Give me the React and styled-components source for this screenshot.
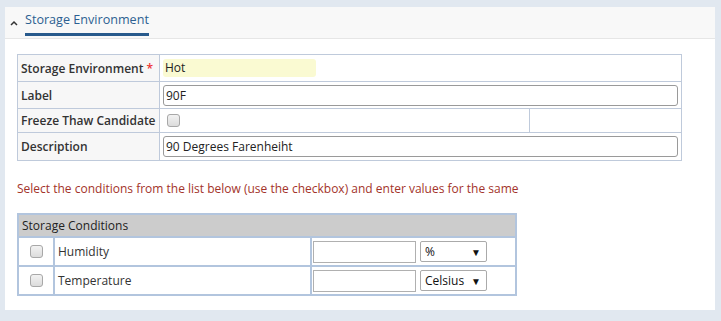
import styled, { createGlobalStyle } from "styled-components";

const GlobalStyle = createGlobalStyle`
  html, body {
    margin: 0;
    padding: 0;
    background: #e1e8f0;
    font-family: "Open Sans", "Liberation Sans", sans-serif;
    font-size: 12px;
    color: #333;
  }
`;

const Page = styled.div`
  padding: 7px 6px 11px 5px;
`;

const Panel = styled.div`
  background: #fff;
  padding-bottom: 14px;
`;

const Header = styled.div`
  display: flex;
  align-items: flex-end;
  height: 31px;
  background: #f8f8f8;
  border-bottom: 1px solid #e6e6e6;
  padding-left: 5px;
`;

const Chevron = styled.svg`
  width: 8px;
  height: 6px;
  margin: 0 7px 12px 0;
`;

const Tab = styled.div`
  font-size: 12.6px;
  color: #2c5f91;
  padding: 0 0 5px;
  border-bottom: 3px solid #285a8c;
  margin-bottom: 2px;
`;

const Body = styled.div`
  padding: 15px 33px 0 12px;
`;

const FormTable = styled.table`
  width: 665px;
  border-collapse: collapse;
  border: 1px solid #bfcadb;

  td {
    border: 1px solid #bfcadb;
    padding: 0 3px;
  }
`;

const Row = styled.tr`
  height: ${(p) => p.$h}px;
`;

const LabelCell = styled.td`
  width: 135px;
  background: #f7f7f7;
  font-weight: 600;
  color: #333;
  white-space: nowrap;
`;

const Req = styled.span`
  color: #e33;
  margin-left: 3px;
`;

const YellowInput = styled.div`
  width: 151px;
  height: 18px;
  line-height: 18px;
  background: #fafad2;
  border-radius: 3px;
  padding-left: 2px;
  color: #222;
`;

const TextInput = styled.input`
  box-sizing: border-box;
  width: ${(p) => p.$w || "100%"};
  height: ${(p) => p.$hh || 21}px;
  border: 1px solid ${(p) => (p.$flat ? "#b0b0b0" : "#9a9a9a")};
  border-radius: ${(p) => (p.$flat ? 0 : 3)}px;
  font: inherit;
  color: #222;
  padding: 0 2px;
  display: block;
`;

const Check = styled.input.attrs({ type: "checkbox" })`
  appearance: none;
  width: 13px;
  height: 13px;
  margin: 0 0 0 ${(p) => p.$indent || 0}px;
  border: 1px solid #a8a8a8;
  border-radius: 3px;
  background: linear-gradient(#f2f2f2, #dcdcdc);
  display: block;
`;

const Instruction = styled.p`
  margin: 19px 0 16px 0;
  color: #a3332a;
  font-size: 12px;
`;

const CondTable = styled.table`
  width: 500px;
  table-layout: fixed;
  border-collapse: collapse;
  border: 2px solid #b2c5de;

  td, th {
    border: 2px solid #b2c5de;
  }
`;

const CondHead = styled.th`
  background: #cccccc;
  font-weight: 400;
  text-align: left;
  height: 21px;
  padding: 0 3px;
  color: #222;
`;

const CondRow = styled.tr`
  height: 29px;
`;

const CheckCell = styled.td`
  padding: 0 0 0 11px;
`;

const NameCell = styled.td`
  padding: 0 3px;
  color: #333;
`;

const ValueCell = styled.td`
  padding: 0 1px;
`;

const ValueWrap = styled.div`
  display: flex;
  gap: 4px;
  align-items: center;
`;

const SelectBox = styled.div`
  position: relative;
  width: 67px;
  height: 21px;
`;

const Select = styled.select`
  appearance: none;
  box-sizing: border-box;
  width: 100%;
  height: 100%;
  border: 1px solid #aaa;
  border-radius: 2px;
  background: #fff;
  font: inherit;
  color: #111;
  padding: 0 4px;
`;

const Arrow = styled.span`
  position: absolute;
  right: 6px;
  top: 4px;
  font-size: 10px;
  color: #111;
  pointer-events: none;
`;

function Unit({ value }) {
  return (
    <SelectBox>
      <Select defaultValue={value}>
        <option>{value}</option>
      </Select>
      <Arrow>▼</Arrow>
    </SelectBox>
  );
}

function Condition({ name, unit }) {
  return (
    <CondRow>
      <CheckCell>
        <Check />
      </CheckCell>
      <NameCell>{name}</NameCell>
      <ValueCell>
        <ValueWrap>
          <TextInput $w="103px" $hh={22} $flat />
          <Unit value={unit} />
        </ValueWrap>
      </ValueCell>
    </CondRow>
  );
}

export default function App() {
  return (
    <>
      <GlobalStyle />
      <Page>
        <Panel>
          <Header>
            <Chevron viewBox="0 0 8 6">
              <path d="M1 5 L4 2 L7 5" fill="none" stroke="#333" strokeWidth="1.5" />
            </Chevron>
            <Tab>Storage Environment</Tab>
          </Header>
          <Body>
            <FormTable>
              <tbody>
                <Row $h={27}>
                  <LabelCell>
                    Storage Environment<Req>*</Req>
                  </LabelCell>
                  <td colSpan={2}>
                    <YellowInput>Hot</YellowInput>
                  </td>
                </Row>
                <Row $h={27}>
                  <LabelCell>Label</LabelCell>
                  <td colSpan={2}>
                    <TextInput defaultValue="90F" />
                  </td>
                </Row>
                <Row $h={24}>
                  <LabelCell>Freeze Thaw Candidate</LabelCell>
                  <td style={{ width: 363 }}>
                    <Check $indent={4} />
                  </td>
                  <td />
                </Row>
                <Row $h={28}>
                  <LabelCell>Description</LabelCell>
                  <td colSpan={2}>
                    <TextInput defaultValue="90 Degrees Farenheiht" />
                  </td>
                </Row>
              </tbody>
            </FormTable>
            <Instruction>
              Select the conditions from the list below (use the checkbox) and enter values for the same
            </Instruction>
            <CondTable>
              <colgroup>
                <col style={{ width: 36 }} />
                <col style={{ width: 257 }} />
                <col />
              </colgroup>
              <thead>
                <tr>
                  <CondHead colSpan={3}>Storage Conditions</CondHead>
                </tr>
              </thead>
              <tbody>
                <Condition name="Humidity" unit="%" />
                <Condition name="Temperature" unit="Celsius" />
              </tbody>
            </CondTable>
          </Body>
        </Panel>
      </Page>
    </>
  );
}
